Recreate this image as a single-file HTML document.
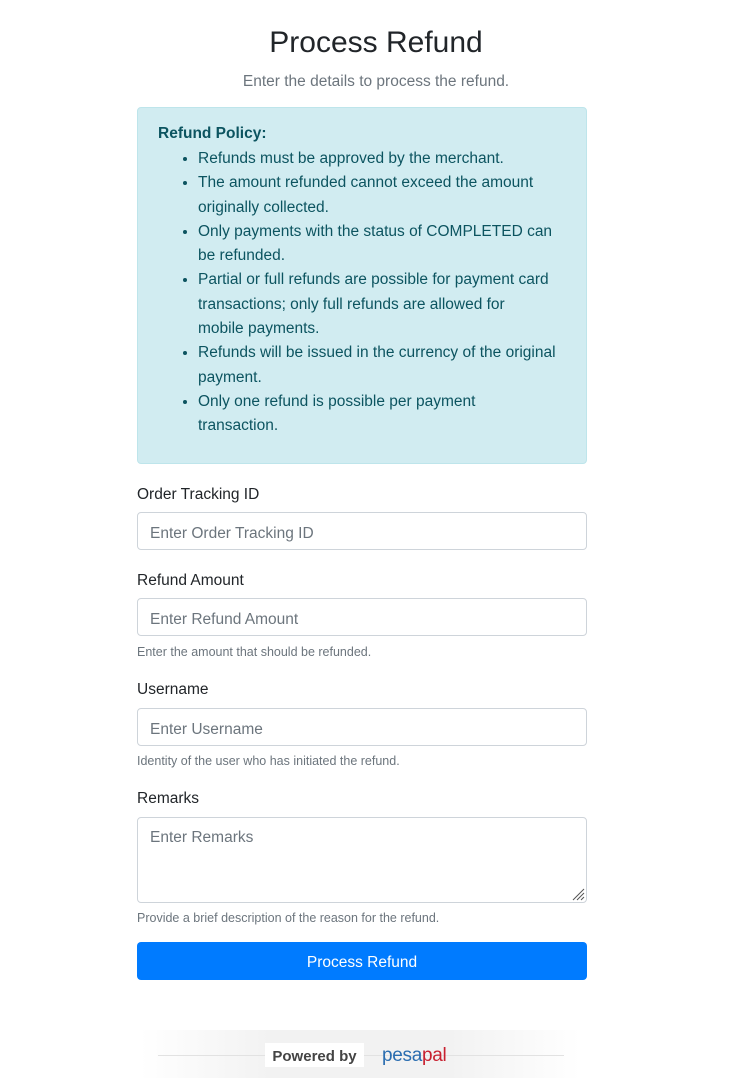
<!DOCTYPE html>
<html><head><meta charset="utf-8"><style>
*{box-sizing:border-box;margin:0;padding:0}
body{width:752px;height:1078px;background:#fff;font-family:"Liberation Sans",sans-serif;color:#212529;position:relative;overflow:hidden}
.a{position:absolute;white-space:nowrap}
h1{position:absolute;top:26px;left:0;width:752px;text-align:center;font-weight:400;font-size:30px;color:#212529}
.sub{top:73px;left:0;width:752px;text-align:center;font-size:15.5px;color:#6c757d}
.alert{position:absolute;left:137px;top:107px;width:450px;height:357px;background:#d1ecf1;border:1px solid #bee5eb;border-radius:4px;color:#0c5460}
.alert b{position:absolute;left:20px;top:17px;font-size:15.5px}
.alert ul{position:absolute;left:60px;top:39px;font-size:15.5px;line-height:24.3px;white-space:nowrap}
.alert li{list-style:disc}
.lbl{font-size:15.5px;color:#212529}
.inp{position:absolute;left:137px;width:450px;height:38px;border:1px solid #ced4da;border-radius:4px;padding:3px 12px 0;font-size:15.5px;color:#6c757d;line-height:36px}
.help{font-size:12.5px;color:#6c757d}
.btn{position:absolute;left:137px;top:942px;width:450px;height:38px;background:#007bff;border-radius:4px;color:#fff;text-align:center;line-height:42px;font-size:15.5px}
.foot{position:absolute;left:140px;top:1030px;width:440px;height:48px;background:linear-gradient(90deg,#fff,#f2f2f2 30%,#f2f2f2 70%,#fff)}
</style></head><body>
<h1>Process Refund</h1>
<div class="a sub">Enter the details to process the refund.</div>
<div class="alert"><b>Refund Policy:</b>
<ul>
<li>Refunds must be approved by the merchant.</li>
<li>The amount refunded cannot exceed the amount<br>originally collected.</li>
<li>Only payments with the status of COMPLETED can<br>be refunded.</li>
<li>Partial or full refunds are possible for payment card<br>transactions; only full refunds are allowed for<br>mobile payments.</li>
<li>Refunds will be issued in the currency of the original<br>payment.</li>
<li>Only one refund is possible per payment<br>transaction.</li>
</ul></div>
<div class="a lbl" style="left:137px;top:486px">Order Tracking ID</div>
<div class="inp" style="top:512px">Enter Order Tracking ID</div>
<div class="a lbl" style="left:137px;top:572px">Refund Amount</div>
<div class="inp" style="top:598px">Enter Refund Amount</div>
<div class="a help" style="left:137px;top:645px">Enter the amount that should be refunded.</div>
<div class="a lbl" style="left:137px;top:681px">Username</div>
<div class="inp" style="top:708px">Enter Username</div>
<div class="a help" style="left:137px;top:754px">Identity of the user who has initiated the refund.</div>
<div class="a lbl" style="left:137px;top:790px">Remarks</div>
<div class="inp" style="top:817px;height:86px;line-height:20px;padding-top:10px">Enter Remarks</div>
<svg class="a" style="left:571px;top:887px" width="14" height="14"><path d="M2 13L13 2M6 13L13 6M10 13L13 10" stroke="#555" stroke-width="1"/></svg>
<div class="a help" style="left:137px;top:911px">Provide a brief description of the reason for the refund.</div>
<div class="btn">Process Refund</div>
<div class="foot"></div>
<div class="a" style="left:158px;top:1055px;width:406px;height:1px;background:#e2e2e2"></div>
<div class="a" style="left:265px;top:1043px;width:99px;height:24px;background:#fff;text-align:center;font-weight:bold;font-size:15px;line-height:28px;color:#444">Powered by</div>
<div class="a" style="left:382px;top:1045px;font-size:19px;color:#2a6db0;letter-spacing:-0.3px">pesa<span style="color:#c8202f">pal</span></div>
</body></html>
